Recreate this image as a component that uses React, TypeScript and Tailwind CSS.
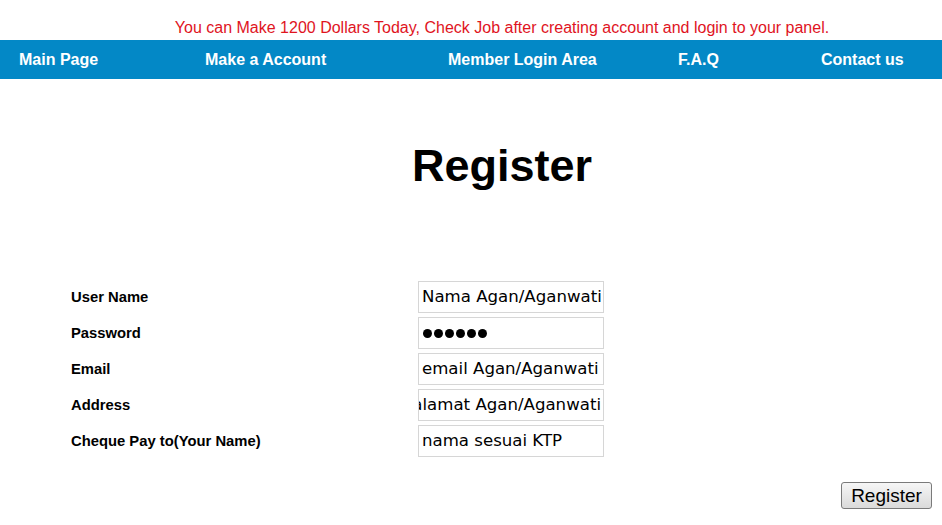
import React from "react";

const inputBox =
  "h-[32px] w-[186px] border border-[#d6d6d6] bg-white flex items-center overflow-hidden whitespace-nowrap text-[16.6px] text-black font-['DejaVu_Sans',Verdana,sans-serif]";

const labels = ["User Name", "Password", "Email", "Address", "Cheque Pay to(Your Name)"];

export default function App() {
  return (
    <div className="w-[942px] h-[525px] bg-white overflow-hidden font-['Liberation_Sans',Arial,sans-serif] text-black">
      <div className="h-[40px] pt-[19px] pl-[62px] text-center text-[16px] leading-[18px] text-[#e0141e] whitespace-nowrap">
        You can Make 1200 Dollars Today, Check Job after creating account and login to your panel.
      </div>
      <nav className="h-[39px] bg-[#0388c6] flex items-center pl-[19px] text-white font-bold text-[16px] whitespace-nowrap">
        <span className="w-[186px]">Main Page</span>
        <span className="w-[243px]">Make a Account</span>
        <span className="w-[230px]">Member Login Area</span>
        <span className="w-[143px]">F.A.Q</span>
        <span>Contact us</span>
      </nav>
      <h1 className="mt-[61px] pl-[62px] text-center text-[45px] leading-[52px] font-bold">Register</h1>
      <div className="mt-[87px] ml-[71px] flex">
        <div className="w-[347px] flex flex-col">
          {labels.map((l) => (
            <div key={l} className="h-[36px] flex items-center text-[14.8px] font-bold whitespace-nowrap">
              {l}
            </div>
          ))}
        </div>
        <div className="flex flex-col">
          <div className="h-[36px] flex items-center">
            <div className={inputBox + " pl-[3px]"}>Nama Agan/Aganwati</div>
          </div>
          <div className="h-[36px] flex items-center">
            <div className={inputBox + " pl-[4px] gap-[2px]"}>
              <span className="w-[9px] h-[9px] rounded-full bg-black" />
              <span className="w-[9px] h-[9px] rounded-full bg-black" />
              <span className="w-[9px] h-[9px] rounded-full bg-black" />
              <span className="w-[9px] h-[9px] rounded-full bg-black" />
              <span className="w-[9px] h-[9px] rounded-full bg-black" />
              <span className="w-[9px] h-[9px] rounded-full bg-black" />
            </div>
          </div>
          <div className="h-[36px] flex items-center">
            <div className={inputBox + " pl-[3px]"}>email Agan/Aganwati</div>
          </div>
          <div className="h-[36px] flex items-center">
            <div className={inputBox + " justify-end pr-[2px]"}>alamat Agan/Aganwati</div>
          </div>
          <div className="h-[36px] flex items-center">
            <div className={inputBox + " pl-[3px]"}>nama sesuai KTP</div>
          </div>
        </div>
      </div>
      <div className="mt-[23px] flex justify-end pr-[10px]">
        <button className="w-[91px] h-[27px] border border-[#7a7a7a] rounded-[3px] bg-gradient-to-b from-[#f6f6f6] to-[#dadada] text-[19px] leading-[25px] text-black font-['Liberation_Sans',Arial,sans-serif]">
          Register
        </button>
      </div>
    </div>
  );
}
